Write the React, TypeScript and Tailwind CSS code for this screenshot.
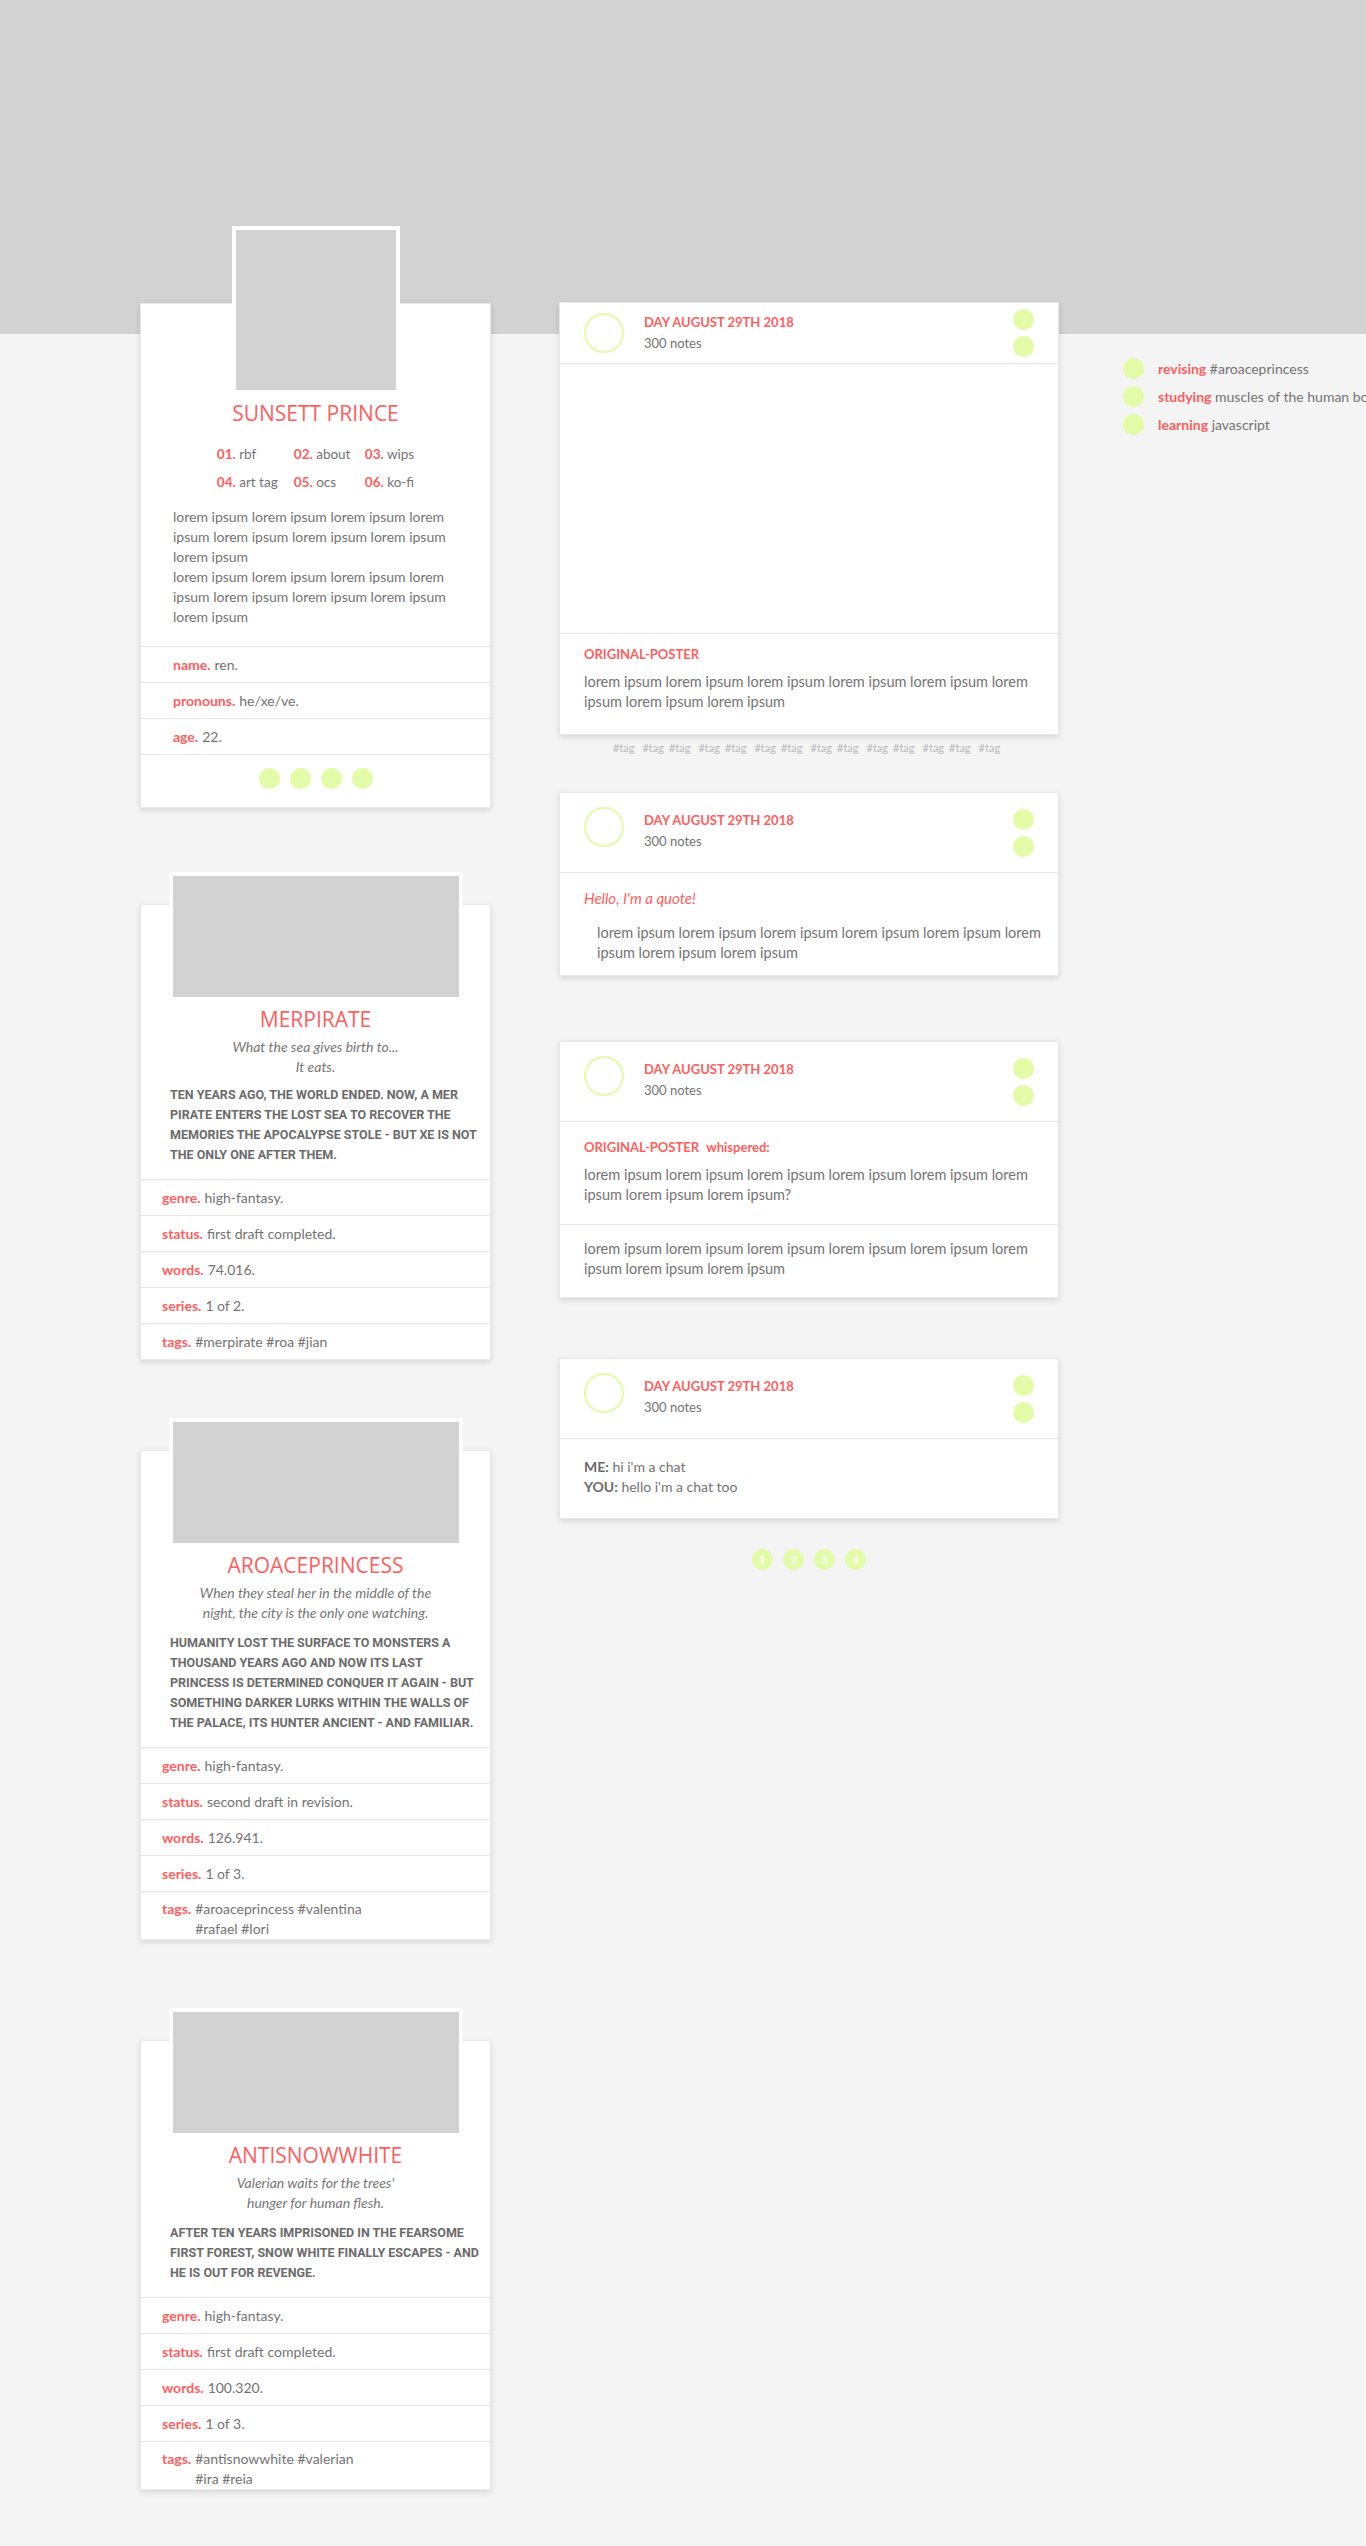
import React from 'react';

const lorem8 = Array(8).fill('lorem ipsum').join(' ');

const Dot = ({ children }: { children?: React.ReactNode }) => (
  <span className="flex h-[21px] w-[21px] items-center justify-center rounded-full bg-[#e2fca7] text-[11px] font-bold leading-none text-white">
    {children}
  </span>
);

const InfoRow = ({
  label,
  value,
  pad,
}: {
  label: string;
  value: string[];
  pad: string;
}) => {
  const multi = value.length > 1;
  return (
    <div
      className={`flex border-t border-[#e6e6e6] ${pad} ${
        multi ? 'pt-[7px] leading-[20px]' : 'py-[8px] leading-[19px]'
      }`}
    >
      <span className="shrink-0 font-bold text-[#fe5e5e]">{label}</span>
      <span className="ml-[4px]">
        {value.map((v) => (
          <span key={v} className="block">
            {v}
          </span>
        ))}
      </span>
    </div>
  );
};

// profile card at the top of the left column
const ProfileCard = () => (
  <div className="mt-[77px] border border-[#e9e9e9] bg-white shadow-[0_2px_6px_rgba(0,0,0,0.13)]">
    <div className="mx-auto -mt-[78px] h-[168px] w-[168px] border-4 border-white bg-[#d2d2d2]" />
    <h1 className="mt-[6px] text-center font-['Open_Sans',sans-serif] text-[21px] font-medium leading-[26px] text-[#fe5e5e]">
      SUNSETT PRINCE
    </h1>
    <div className="mx-auto mt-[18px] grid w-fit grid-cols-[77px_71px_auto] gap-y-[8px] text-[13.5px] leading-[20px]">
      {[
        ['01.', 'rbf'],
        ['02.', 'about'],
        ['03.', 'wips'],
        ['04.', 'art tag'],
        ['05.', 'ocs'],
        ['06.', 'ko-fi'],
      ].map(([n, t]) => (
        <span key={n}>
          <b className="text-[#fe5e5e]">{n}</b> {t}
        </span>
      ))}
    </div>
    <div className="mt-[15px] px-[32px] pb-[19px] leading-[20px]">
      <p>{lorem8}</p>
      <p>{lorem8}</p>
    </div>
    <InfoRow label="name." value={['ren.']} pad="px-[32px]" />
    <InfoRow label="pronouns." value={['he/xe/ve.']} pad="px-[32px]" />
    <InfoRow label="age." value={['22.']} pad="px-[32px]" />
    <div className="flex justify-center gap-[10px] border-t border-[#e6e6e6] pt-[13px] pb-[18px]">
      <Dot />
      <Dot />
      <Dot />
      <Dot />
    </div>
  </div>
);

type Book = {
  title: string;
  tagline: React.ReactNode;
  summary: string[];
  rows: [string, string][];
  tags: string[];
  mt: string;
  summaryMt: string;
};

const books: Book[] = [
  {
    title: 'MERPIRATE',
    tagline: (
      <>
        What the sea gives birth to...
        <br />
        It eats.
      </>
    ),
    summary: [
      'Ten years ago, the world ended. Now, a mer',
      'pirate enters the lost sea to recover the',
      'memories the apocalypse stole - but xe is not',
      'the only one after them.',
    ],
    rows: [
      ['genre.', 'high-fantasy.'],
      ['status.', 'first draft completed.'],
      ['words.', '74.016.'],
      ['series.', '1 of 2.'],
    ],
    tags: ['#merpirate #roa #jian'],
    mt: 'mt-[96px]',
    summaryMt: 'mt-[8px]',
  },
  {
    title: 'AROACEPRINCESS',
    tagline: (
      <>
        When they steal her in the middle of the
        <br />
        night, the city is the only one watching.
      </>
    ),
    summary: [
      'Humanity lost the surface to monsters a',
      'thousand years ago and now its last',
      'princess is determined conquer it again - but',
      'something darker lurks within the walls of',
      'the palace, its hunter ancient - and familiar.',
    ],
    rows: [
      ['genre.', 'high-fantasy.'],
      ['status.', 'second draft in revision.'],
      ['words.', '126.941.'],
      ['series.', '1 of 3.'],
    ],
    tags: ['#aroaceprincess #valentina', '#rafael #lori'],
    mt: 'mt-[90px]',
    summaryMt: 'mt-[10px]',
  },
  {
    title: 'ANTISNOWWHITE',
    tagline: (
      <>
        Valerian waits for the trees'
        <br />
        hunger for human flesh.
      </>
    ),
    summary: [
      'After ten years imprisoned in the fearsome',
      'first forest, snow white finally escapes - and',
      'he is out for revenge.',
    ],
    rows: [
      ['genre.', 'high-fantasy.'],
      ['status.', 'first draft completed.'],
      ['words.', '100.320.'],
      ['series.', '1 of 3.'],
    ],
    tags: ['#antisnowwhite #valerian', '#ira #reia'],
    mt: 'mt-[100px]',
    summaryMt: 'mt-[10px]',
  },
];

const BookCard = ({ book }: { book: Book }) => (
  <div className={`${book.mt} border border-[#e9e9e9] bg-white shadow-[0_2px_6px_rgba(0,0,0,0.13)]`}>
    <div className="mx-auto -mt-[33px] h-[129px] w-[294px] border-4 border-white bg-[#d2d2d2]" />
    <h2 className="mt-[5px] text-center font-['Open_Sans',sans-serif] text-[21px] font-medium leading-[26px] text-[#fe5e5e]">
      {book.title}
    </h2>
    <p className="mt-[5px] text-center text-[14px] italic leading-[20px] text-[#767676]">{book.tagline}</p>
    <div
      className={`${book.summaryMt} pl-[29px] pr-[8px] font-['Roboto',sans-serif] text-[12.5px] font-bold uppercase leading-[20px] text-[#6b6b6b]`}
    >
      {book.summary.map((l) => (
        <p key={l} className="whitespace-nowrap">
          {l}
        </p>
      ))}
    </div>
    <div className="mt-[14px]">
      {book.rows.map(([l, v]) => (
        <InfoRow key={l} label={l} value={[v]} pad="px-[21px]" />
      ))}
      <InfoRow label="tags." value={book.tags} pad="px-[21px]" />
    </div>
  </div>
);

const PostHeader = ({ tall }: { tall: boolean }) => (
  <div
    className={`flex border-b border-[#e6e6e6] pl-[24px] pr-[24px] ${
      tall ? 'h-[80px] items-start pt-[14px]' : 'h-[61px] items-center'
    }`}
  >
    <div className="h-[40px] w-[40px] shrink-0 rounded-full border-2 border-[#e2fca7]" />
    <div className={`ml-[20px] text-[13px] leading-[21px] ${tall ? 'mt-[3px]' : ''}`}>
      <div className="font-bold text-[#fe5e5e]">DAY AUGUST 29TH 2018</div>
      <div>300 notes</div>
    </div>
    <div className={`ml-auto flex flex-col gap-[6px] ${tall ? 'mt-[2px]' : ''}`}>
      <Dot />
      <Dot />
    </div>
  </div>
);

const card = 'border border-[#e9e9e9] bg-white shadow-[0_2px_6px_rgba(0,0,0,0.13)]';

export default function App() {
  return (
    <div className="min-h-[2546px] w-full overflow-hidden bg-[linear-gradient(to_bottom,#d2d2d2_334px,#f4f4f4_334px)] font-['Lato',sans-serif] text-[14px] text-[#737373]">
      <div className="flex items-start pt-[226px] pb-[58px]">
        {/* left column: profile + books */}
        <aside className="ml-[140px] w-[351px] shrink-0">
          <ProfileCard />
          {books.map((b) => (
            <BookCard key={b.title} book={b} />
          ))}
        </aside>

        {/* posts */}
        <main className="ml-[68px] mt-[76px] w-[500px] shrink-0">
          <div className={card}>
            <PostHeader tall={false} />
            <div className="h-[269px]" />
            <div className="border-t border-[#e6e6e6] px-[24px] pt-[10px] pb-[22px] leading-[20px]">
              <div className="text-[13px] font-bold text-[#fe5e5e]">ORIGINAL-POSTER</div>
              <p className="mt-[8px] text-[14.5px]">{lorem8}</p>
            </div>
          </div>
          <div className="mt-[6px] flex justify-center text-[11px] leading-[14px] text-[#bababa]">
            {Array.from({ length: 14 }).map((_, i) => (
              <span key={i} className={i % 2 === 0 ? 'mr-[8px]' : 'mr-[5px]'}>
                #tag
              </span>
            ))}
          </div>

          <div className={`mt-[37px] ${card}`}>
            <PostHeader tall />
            <div className="pl-[24px] pr-[10px] pt-[15px] pb-[12px] leading-[20px]">
              <div className="text-[15px] italic text-[#fe5e5e]">Hello, I'm a quote!</div>
              <p className="mt-[15px] pl-[13px] text-[14.5px]">{lorem8}</p>
            </div>
          </div>

          <div className={`mt-[65px] ${card}`}>
            <PostHeader tall />
            <div className="px-[24px] pt-[15px] pb-[19px] leading-[20px]">
              <div className="text-[13px] font-bold text-[#fe5e5e]">
                ORIGINAL-POSTER <span className="ml-[4px]">whispered:</span>
              </div>
              <p className="mt-[8px] text-[14.5px]">{`${lorem8}?`}</p>
            </div>
            <div className="border-t border-[#e6e6e6] px-[24px] pt-[14px] pb-[18px] leading-[20px]">
              <p className="text-[14.5px]">{lorem8}</p>
            </div>
          </div>

          <div className={`mt-[60px] ${card}`}>
            <PostHeader tall />
            <div className="px-[24px] pt-[18px] pb-[21px] leading-[20px]">
              <div>
                <b className="text-[#6b6b6b]">ME:</b> hi i'm a chat
              </div>
              <div>
                <b className="text-[#6b6b6b]">YOU:</b> hello i'm a chat too
              </div>
            </div>
          </div>

          <div className="mt-[30px] flex justify-center gap-[10px]">
            <Dot>1</Dot>
            <Dot>2</Dot>
            <Dot>3</Dot>
            <Dot>4</Dot>
          </div>
        </main>

        {/* right sidebar */}
        <div className="ml-[64px] mt-[132px] flex shrink-0 flex-col gap-[7px] whitespace-nowrap">
          {[
            ['revising', '#aroaceprincess'],
            ['studying', 'muscles of the human body'],
            ['learning', 'javascript'],
          ].map(([a, b]) => (
            <div key={a} className="flex h-[21px] items-center gap-[14px]">
              <Dot />
              <span>
                <b className="text-[#fe5e5e]">{a}</b> {b}
              </span>
            </div>
          ))}
        </div>
      </div>
    </div>
  );
}
